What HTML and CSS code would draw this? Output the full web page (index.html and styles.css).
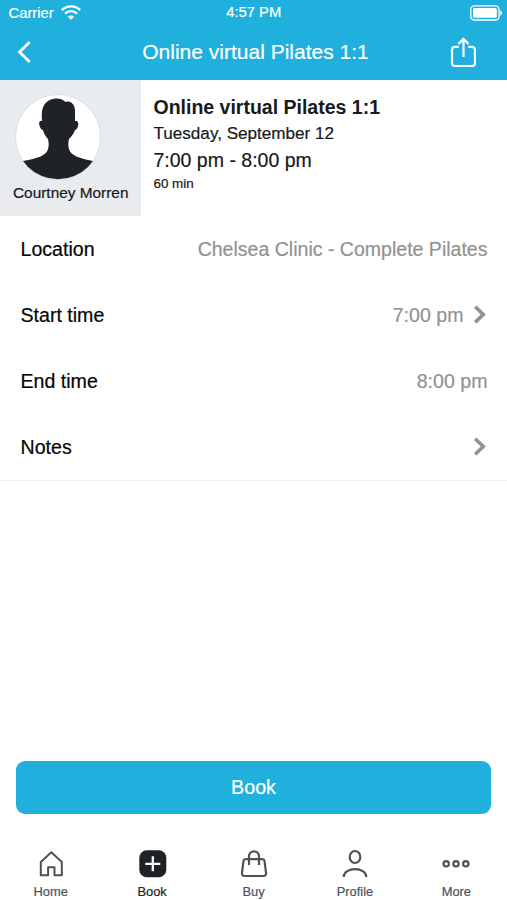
FILE: index.html
```html
<!DOCTYPE html>
<html lang="en">
<head>
<meta charset="utf-8">
<title>Online virtual Pilates 1:1</title>
<link rel="stylesheet" href="styles.css">
</head>
<body>
<div class="app">
  <header class="top">
    <div class="status">
      <div class="carrier"><span>Carrier</span>
        <svg class="wifi" width="20" height="15" viewBox="0 0 20 15" fill="none" stroke="#fff" stroke-width="2.200"><path d="M.8 5.100a13 13 0 0 1 18.400 0M4.100 8.600a8.400 8.400 0 0 1 11.800 0"/><path d="M10 14.800 6.800 11.800a4.600 4.600 0 0 1 6.400 0z" fill="#fff" stroke="none"/></svg>
      </div>
      <span class="clock">4:57 PM</span>
      <svg class="battery" width="33" height="16" viewBox="0 0 33 16"><rect x=".8" y=".8" width="28.2" height="14.2" rx="3.6" fill="none" stroke="#fff" stroke-width="1.3"/><rect x="3" y="3" width="23.8" height="9.8" rx="1.5" fill="#fff"/><path d="M30.300 5.200c2.300.7 2.300 4.700 0 5.400z" fill="#fff"/></svg>
    </div>
    <div class="nav">
      <svg class="back" width="16" height="24" viewBox="0 0 16 24" fill="none" stroke="#fff" stroke-width="2.800"><path d="M14.700 2 4.500 12l10.200 10"/></svg>
      <h1>Online virtual Pilates 1:1</h1>
      <svg class="share" width="26" height="31" viewBox="0 0 26 31" fill="none" stroke="#fff" stroke-width="2.200"><path d="M8.800 9.800H5a3 3 0 0 0-3 3V26a3 3 0 0 0 3 3h17a3 3 0 0 0 3-3V12.800a3 3 0 0 0-3-3h-3.800M13.500 20V2M8.400 7 13.500 1.900 18.600 7"/></svg>
    </div>
  </header>
  <section class="summary">
    <div class="trainer">
      <svg class="avatar" width="88" height="88" viewBox="0 0 88 88"><defs><clipPath id="round"><circle cx="44" cy="44" r="42.300"/></clipPath></defs><circle cx="44" cy="44" r="42.500" fill="#fff" stroke="#d3d6d9" stroke-width=".7"/><path clip-path="url(#round)" fill="#1f2227" d="M0 71 9 68C20 66 29 64 33 58.500 35 55 35 50 34 46 31 43 30 40 28.800 37 26 36.500 24 30 26 28L28 28C27 17 29 10 36 7 41 4.500 48 5 51.500 9 57 7 61.500 12 61 19L61 28 63 28C65.500 30 64 36.500 61 37 60 40 58 43 55 46 54 50 54 55 56 58.500 60 64 69 66 79 68L88 71V88H0Z"/></svg>
      <span>Courtney Morren</span>
    </div>
    <div class="details">
      <h2>Online virtual Pilates 1:1</h2>
      <p class="date">Tuesday, September 12</p>
      <p class="time">7:00 pm - 8:00 pm</p>
      <p class="length">60 min</p>
    </div>
  </section>
  <section class="rows">
    <div class="row"><span>Location</span><span class="value place">Chelsea Clinic - Complete Pilates</span></div>
    <div class="row"><span>Start time</span><span class="value">7:00 pm<svg width="15" height="20" viewBox="0 0 15 20" fill="none" stroke="#929292" stroke-width="3.700"><path d="m2.200 1.700 8 7.800-8 7.800"/></svg></span></div>
    <div class="row"><span>End time</span><span class="value">8:00 pm</span></div>
    <div class="row"><span>Notes</span><span class="value"><svg width="15" height="20" viewBox="0 0 15 20" fill="none" stroke="#929292" stroke-width="3.700"><path d="m2.200 1.700 8 7.800-8 7.800"/></svg></span></div>
  </section>
  <div class="action"><button class="book">Book</button></div>
  <nav class="tabs">
    <div class="tab"><svg width="30" height="30" viewBox="0 0 30 30" fill="none" stroke="#505257" stroke-width="2" stroke-linejoin="round"><path d="M4.800 13 15.300 3.200 25.800 13v13.200h-7.300v-8h-6.400v8H4.800z"/></svg><span>Home</span></div>
    <div class="tab active"><svg width="30" height="30" viewBox="0 0 30 30"><rect x="2.300" y="1.300" width="27" height="27" rx="7.500" fill="#1e2126"/><path d="M15.800 7.300v15M8.300 14.800h15" stroke="#fff" stroke-width="2.300"/></svg><span>Book</span></div>
    <div class="tab"><svg width="30" height="30" viewBox="0 0 30 30" fill="none" stroke="#505257" stroke-width="2.200" stroke-linejoin="round"><path d="M6.500 10.200h17q1.700 0 2 1.700L27 23.700q.3 3.300-2.500 3.300h-19q-2.800 0-2.500-3.300L4.500 11.900q.3-1.700 2-1.700zM10 16V7.500c0-6.800 10-6.800 10 0V16"/></svg><span>Buy</span></div>
    <div class="tab"><svg width="30" height="30" viewBox="0 0 30 30" fill="none" stroke="#505257" stroke-width="2.200"><ellipse cx="15" cy="8" rx="5.300" ry="6"/><path d="M3.700 28c0-10.500 22.600-10.500 22.600 0"/></svg><span>Profile</span></div>
    <div class="tab"><svg width="30" height="30" viewBox="0 0 30 30" fill="none" stroke="#505257" stroke-width="2.200"><circle cx="5.200" cy="14.800" r="2.700"/><circle cx="15" cy="14.800" r="2.700"/><circle cx="24.800" cy="14.800" r="2.700"/></svg><span>More</span></div>
  </nav>
</div>
</body>
</html>
```
FILE: styles.css
```css
* { box-sizing: border-box; }
body { margin: 0; background: #fff; font-family: "Liberation Sans", Arial, sans-serif; color: #17191c; -webkit-text-stroke: .2px; }
h1, h2, p { margin: 0; font-weight: 400; white-space: nowrap; }
svg { display: block; flex: none; }
.app { width: 507px; height: 900px; display: flex; flex-direction: column; overflow: hidden; }
.top { height: 80px; background: #20b0de; color: #fff; flex: none; }
.status { height: 25px; padding: 0 4px 0 8.500px; display: grid; grid-template-columns: 1fr auto 1fr; align-items: center; font-size: 14.800px; line-height: 24px; }
.carrier { display: flex; align-items: center; gap: 7.500px; }
.clock { font-size: 14.800px; margin: -2px 4px 0 0; }
.battery { justify-self: end; }
.nav { height: 55px; display: grid; grid-template-columns: 60px 1fr 60px; align-items: center; }
.back { margin: 0 0 2px 15px; }
.nav h1 { font-size: 21px; line-height: 24px; text-align: center; margin: 0 0 2px 4px; }
.share { margin: 0 0 1px 3px; }
.summary { height: 136px; display: flex; flex: none; }
.trainer { width: 141px; background: #e8ecef; padding: 13px 0 0 14px; font-size: 15.400px; line-height: 20px; }
.trainer span { display: block; margin: 2px 0 0 -1px; white-space: nowrap; }
.details { padding: 15px 0 0 12.500px; }
.details h2 { font-size: 19.500px; line-height: 24px; font-weight: 700; -webkit-text-stroke: 0; }
.date { font-size: 17.100px; line-height: 24px; padding-top: 3px; }
.time { font-size: 19.500px; line-height: 24px; padding-top: 2px; height: 27px; }
.length { font-size: 13.400px; line-height: 20px; padding-top: 1px; }
.rows { height: 265px; border-bottom: 1px solid #ededed; font-size: 19.600px; color: #050505; }
.row { height: 66px; padding: 0 19.500px 0 20.500px; display: flex; align-items: center; justify-content: space-between; }
.value { color: #929292; display: flex; align-items: center; gap: 9px; }
.place { font-size: 19.550px; }
.action { margin-top: auto; padding: 0 16px 26.500px; }
.book { display: block; width: 100%; height: 53px; padding: 1px 0 0; border: 0; border-radius: 9px; background: #20b0de; color: #fff; font: 19.700px "Liberation Sans", Arial, sans-serif; -webkit-text-stroke: .2px; }
.tabs { height: 60px; display: flex; }
.tab { flex: 1; display: flex; flex-direction: column; align-items: center; padding-top: 9px; color: #505257; font-size: 12.900px; line-height: 18px; gap: 4px; }
.active { color: #1e2126; }
```
